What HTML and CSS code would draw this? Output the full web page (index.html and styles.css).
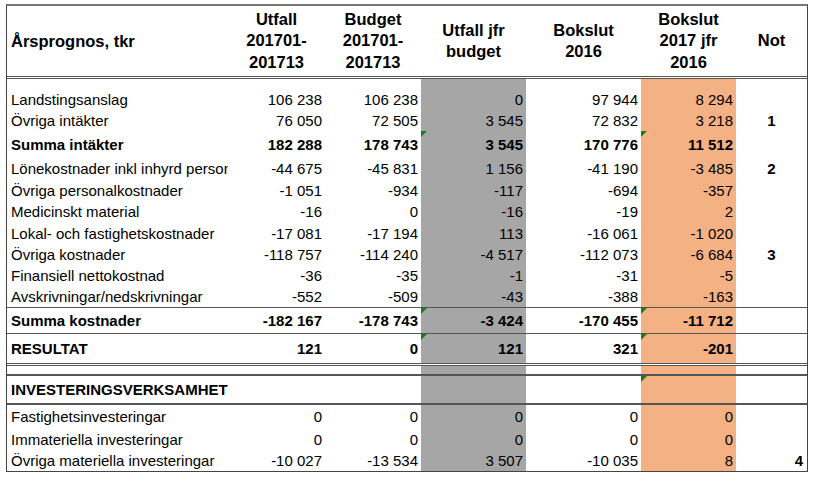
FILE: index.html
```html
<!DOCTYPE html>
<html lang="sv">
<head>
<meta charset="utf-8">
<title>Årsprognos</title>
<link rel="stylesheet" href="styles.css">
</head>
<body>
<div class="sheet">
  <div class="row head">
    <div class="c lbl">Årsprognos, tkr</div>
    <div class="c h">Utfall<br>201701-<br>201713</div>
    <div class="c h">Budget<br>201701-<br>201713</div>
    <div class="c h">Utfall jfr<br>budget</div>
    <div class="c h">Bokslut<br>2016</div>
    <div class="c h">Bokslut<br>2017 jfr<br>2016</div>
    <div class="c h">Not</div>
  </div>

  <div class="row sp1">
    <div class="c"></div><div class="c"></div><div class="c"></div><div class="c gray"></div><div class="c"></div><div class="c orange"></div><div class="c"></div>
  </div>

  <div class="row r22">
    <div class="c lbl">Landstingsanslag</div>
    <div class="c n">106 238</div><div class="c n">106 238</div><div class="c n gray">0</div><div class="c n">97 944</div><div class="c n orange">8 294</div><div class="c note"></div>
  </div>
  <div class="row r21">
    <div class="c lbl">Övriga intäkter</div>
    <div class="c n">76 050</div><div class="c n">72 505</div><div class="c n gray">3 545</div><div class="c n">72 832</div><div class="c n orange">3 218</div><div class="c note">1</div>
  </div>
  <div class="row r26 bold">
    <div class="c lbl">Summa intäkter</div>
    <div class="c n">182 288</div><div class="c n">178 743</div><div class="c n gray flag">3 545</div><div class="c n">170 776</div><div class="c n orange flag">11 512</div><div class="c note"></div>
  </div>
  <div class="row r22">
    <div class="c lbl">Lönekostnader inkl inhyrd personal</div>
    <div class="c n">-44 675</div><div class="c n">-45 831</div><div class="c n gray">1 156</div><div class="c n">-41 190</div><div class="c n orange">-3 485</div><div class="c note">2</div>
  </div>
  <div class="row r22">
    <div class="c lbl">Övriga personalkostnader</div>
    <div class="c n">-1 051</div><div class="c n">-934</div><div class="c n gray">-117</div><div class="c n">-694</div><div class="c n orange">-357</div><div class="c note"></div>
  </div>
  <div class="row r21">
    <div class="c lbl">Medicinskt material</div>
    <div class="c n">-16</div><div class="c n">0</div><div class="c n gray">-16</div><div class="c n">-19</div><div class="c n orange">2</div><div class="c note"></div>
  </div>
  <div class="row r22">
    <div class="c lbl">Lokal- och fastighetskostnader</div>
    <div class="c n">-17 081</div><div class="c n">-17 194</div><div class="c n gray">113</div><div class="c n">-16 061</div><div class="c n orange">-1 020</div><div class="c note"></div>
  </div>
  <div class="row r21">
    <div class="c lbl">Övriga kostnader</div>
    <div class="c n">-118 757</div><div class="c n">-114 240</div><div class="c n gray">-4 517</div><div class="c n">-112 073</div><div class="c n orange">-6 684</div><div class="c note">3</div>
  </div>
  <div class="row r21">
    <div class="c lbl">Finansiell nettokostnad</div>
    <div class="c n">-36</div><div class="c n">-35</div><div class="c n gray">-1</div><div class="c n">-31</div><div class="c n orange">-5</div><div class="c note"></div>
  </div>
  <div class="row r21 line1">
    <div class="c lbl">Avskrivningar/nedskrivningar</div>
    <div class="c n">-552</div><div class="c n">-509</div><div class="c n gray">-43</div><div class="c n">-388</div><div class="c n orange">-163</div><div class="c note"></div>
  </div>
  <div class="row r25 bold line1">
    <div class="c lbl">Summa kostnader</div>
    <div class="c n">-182 167</div><div class="c n">-178 743</div><div class="c n gray flag">-3 424</div><div class="c n">-170 455</div><div class="c n orange flag">-11 712</div><div class="c note"></div>
  </div>
  <div class="row r29 bold dbl">
    <div class="c lbl">RESULTAT</div>
    <div class="c n">121</div><div class="c n">0</div><div class="c n gray flag">121</div><div class="c n">321</div><div class="c n orange flag">-201</div><div class="c note"></div>
  </div>
  <div class="row sp2 line2">
    <div class="c"></div><div class="c"></div><div class="c"></div><div class="c gray"></div><div class="c"></div><div class="c orange"></div><div class="c"></div>
  </div>
  <div class="row r27 bold line2">
    <div class="c lbl">INVESTERINGSVERKSAMHET</div>
    <div class="c n"></div><div class="c n"></div><div class="c n gray"></div><div class="c n"></div><div class="c n orange flag"></div><div class="c note"></div>
  </div>
  <div class="row r23">
    <div class="c lbl">Fastighetsinvesteringar</div>
    <div class="c n">0</div><div class="c n">0</div><div class="c n gray">0</div><div class="c n">0</div><div class="c n orange">0</div><div class="c note"></div>
  </div>
  <div class="row r22">
    <div class="c lbl">Immateriella investeringar</div>
    <div class="c n">0</div><div class="c n">0</div><div class="c n gray">0</div><div class="c n">0</div><div class="c n orange">0</div><div class="c note"></div>
  </div>
  <div class="row r21">
    <div class="c lbl">Övriga materiella investeringar</div>
    <div class="c n">-10 027</div><div class="c n">-13 534</div><div class="c n gray">3 507</div><div class="c n">-10 035</div><div class="c n orange">8</div><div class="c note right">4</div>
  </div>
</div>
</body>
</html>
```

FILE: styles.css
```css
body {
  margin: 0;
  background: #fff;
  color: #000;
  font-family: "Liberation Sans", Arial, sans-serif;
  font-size: 15px;
}

.sheet {
  margin: 4px 0 0 6px;
  width: 800px;
  border-left: 1px solid #444;
  border-right: 1px solid #444;
  border-top: 2px solid #777;
  border-bottom: 1px solid #444;
}

.row {
  display: grid;
  grid-template-columns: 221px 97px 96px 105px 115px 95px 71px;
}

.c {
  display: flex;
  align-items: center;
  white-space: nowrap;
  overflow: hidden;
  min-width: 0;
  position: relative;
}

.lbl {
  padding-left: 4px;
}

.n {
  justify-content: flex-end;
  padding-right: 3px;
}

.note {
  justify-content: center;
  font-weight: bold;
}

.note.right {
  justify-content: flex-end;
  padding-right: 4px;
}

.gray { background: #a6a6a6; }
.orange { background: #f4b183; }

.bold { font-weight: bold; }

.head {
  height: 70px;
  border-bottom: 3px double #555;
  font-weight: bold;
  font-size: 16.5px;
}

.head .h {
  justify-content: center;
  text-align: center;
  line-height: 21.5px;
}

.sp1 { height: 9px; }
.sp2 { height: 8px; }

.r21 { height: 21px; }
.r22 { height: 22px; }
.r23 { height: 23px; }
.r25 { height: 25px; }
.r26 { height: 26px; }
.r27 { height: 27px; }
.r29 { height: 29px; }

.line1 { border-bottom: 1px solid #555; }
.line2 { border-bottom: 2px solid #555; }
.dbl { border-bottom: 3px double #555; }

.flag::before {
  content: "";
  position: absolute;
  top: 0;
  left: 0;
  border-top: 6px solid #1d7a1d;
  border-right: 6px solid transparent;
}
```
